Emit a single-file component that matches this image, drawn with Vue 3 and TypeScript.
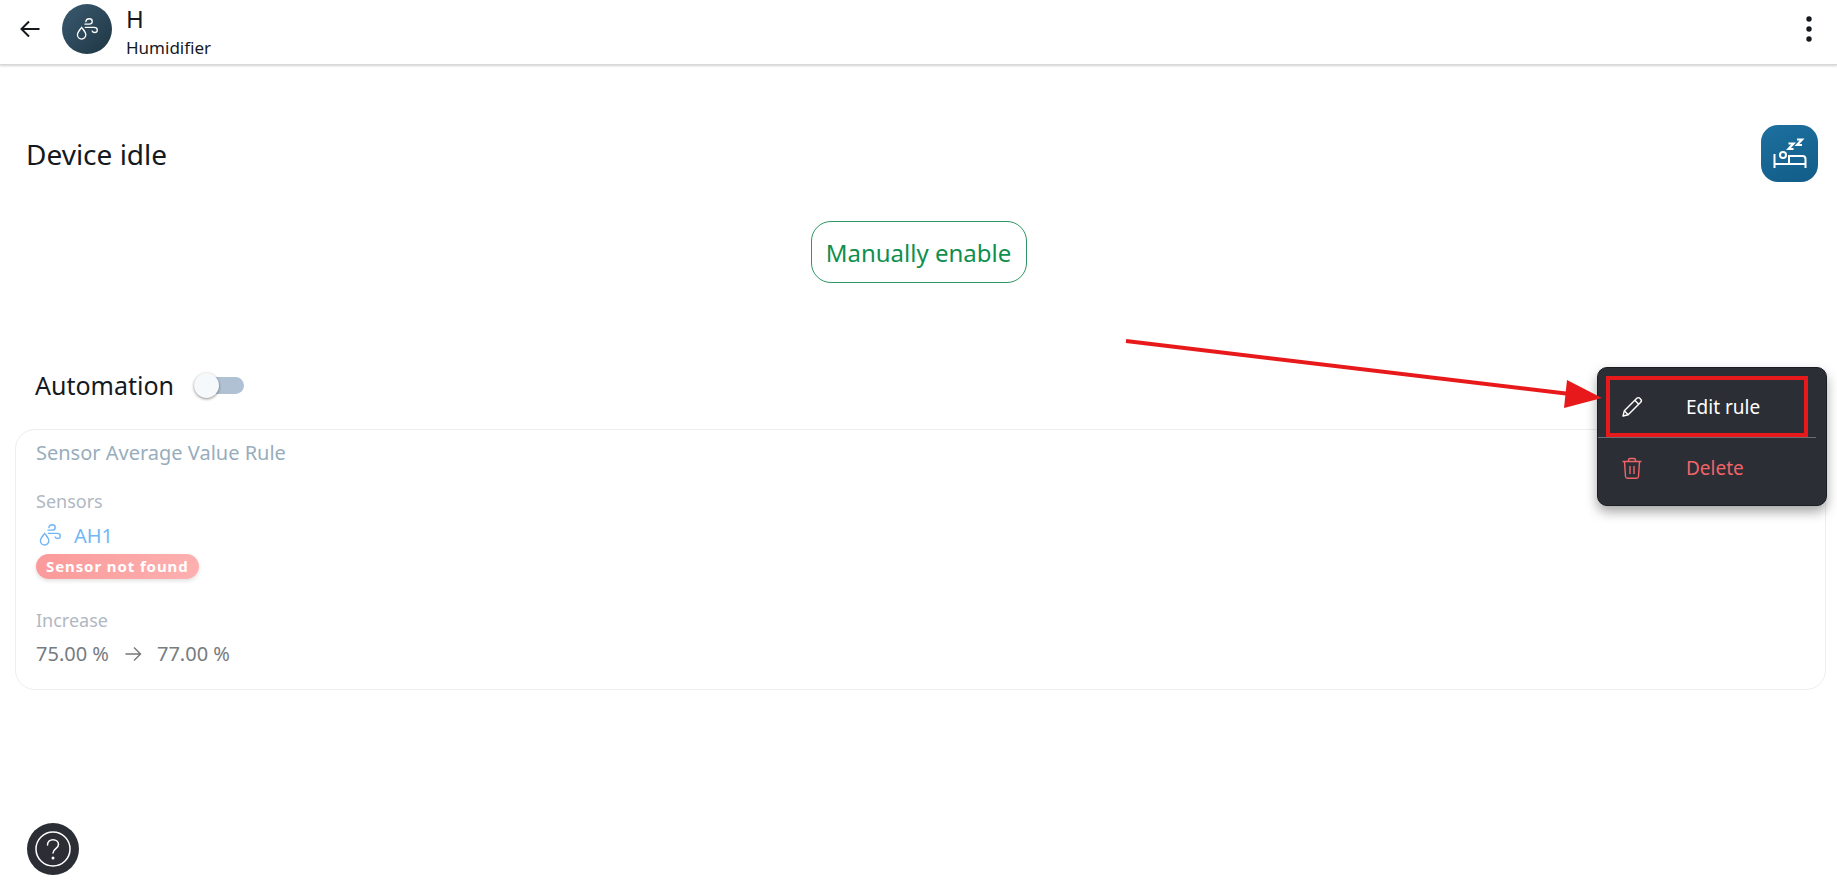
<script setup lang="ts">
const menuItems = [
  { key: "edit", label: "Edit rule" },
  { key: "delete", label: "Delete" },
];
</script>

<template>
  <div class="page">
    <header class="topbar">
      <svg class="back" viewBox="0 0 24 24" width="24" height="24">
        <path d="M21.5 12H3.5M11 4.5 3.5 12l7.5 7.5" fill="none" stroke="#15191e" stroke-width="2" />
      </svg>
      <div class="avatar">
        <svg viewBox="0 0 24 24" width="28" height="28" fill="none" stroke="#fff" stroke-width="1.1" stroke-linecap="round">
          <path d="M7.4 10.6c-1.6 2.2-3.6 4.1-3.6 6.4a3.6 3.6 0 0 0 7.2 0c0-2.3-2-4.2-3.6-6.4Z" />
          <path d="M11 5.6c.3-1.5 1.5-2.4 2.9-2.4 1.500 0 2.600 1 2.600 2.300 0 1.400-1.100 2.300-2.600 2.300h-3.700" />
          <path d="M10.500 10.600h7.500c1.500 0 2.800.8 2.800 2.200 0 1.300-1 2.200-2.300 2.200-1 0-1.800-.5-2.100-1.300" />
        </svg>
      </div>
      <div class="titles">
        <div class="name">H</div>
        <div class="kind">Humidifier</div>
      </div>
      <svg class="more" viewBox="0 0 8 28" width="8" height="28">
        <circle cx="4" cy="4" r="2.700" fill="#15191e" />
        <circle cx="4" cy="14" r="2.700" fill="#15191e" />
        <circle cx="4" cy="24" r="2.700" fill="#15191e" />
      </svg>
    </header>

    <section class="state-row">
      <h1>Device idle</h1>
      <div class="state-icon">
        <svg viewBox="0 0 40 40" width="40" height="40" fill="none" stroke="#fff" stroke-width="2">
          <path d="M18.500 9.500h5l-5 5.500h5M27 5.500h5l-5 5.500h5" stroke-width="2.200" />
          <circle cx="13" cy="21" r="3" />
          <path d="M4.500 20v14M4.500 30h31M35.500 34v-9c0-1.800-1.200-3-3-3H19v8" />
        </svg>
      </div>
    </section>

    <div class="action-row">
      <button type="button" class="enable-btn">Manually enable</button>
    </div>

    <div class="automation-row">
      <span class="automation-label">Automation</span>
      <span class="switch"><span class="thumb"></span></span>
    </div>

    <section class="rule-card">
      <div class="rule-title">Sensor Average Value Rule</div>
      <div class="field-label sensors-label">Sensors</div>
      <div class="sensor">
        <svg viewBox="0 0 24 24" width="28" height="28" fill="none" stroke="#72b6f5" stroke-width="1.200" stroke-linecap="round">
          <path d="M7.400 10.600c-1.600 2.200-3.600 4.100-3.600 6.400a3.600 3.600 0 0 0 7.200 0c0-2.300-2-4.200-3.600-6.400Z" />
          <path d="M11 5.600c.3-1.500 1.500-2.400 2.900-2.400 1.500 0 2.600 1 2.600 2.300 0 1.400-1.100 2.300-2.600 2.300h-3.700" />
          <path d="M10.500 10.600h7.500c1.500 0 2.800.8 2.800 2.200 0 1.300-1 2.200-2.300 2.200-1 0-1.800-.5-2.100-1.300" />
        </svg>
        <span>AH1</span>
      </div>
      <div class="not-found">Sensor not found</div>
      <div class="field-label increase-label">Increase</div>
      <div class="values">
        <span>75.00 %</span>
        <svg viewBox="0 0 20 20" width="20" height="20" fill="none" stroke="#777" stroke-width="1.400">
          <path d="M2.500 10h15M11 3.500l6.500 6.500-6.500 6.500" />
        </svg>
        <span>77.00 %</span>
      </div>
    </section>

    <div class="menu">
      <div v-for="item in menuItems" :key="item.key" :class="['menu-item', item.key]">
        <svg v-if="item.key === 'edit'" viewBox="0 0 24 24" width="24" height="24" fill="none" stroke="#fff" stroke-width="1.400" stroke-linejoin="round">
          <path d="M3 21l1.300-5.200L16.800 3.300c.9-.9 2.200-.9 3 0l.9.900c.9.900.9 2.100 0 3L8.200 19.700 3 21Z" />
          <path d="M14.800 5.300l3.900 3.900M4.300 15.800l3.900 3.900" />
        </svg>
        <svg v-else viewBox="0 0 24 24" width="24" height="24" fill="none" stroke="#f0646a" stroke-width="1.400" stroke-linejoin="round">
          <path d="M2.500 5.500h19M8.500 5.500V3.800c0-.8.6-1.300 1.300-1.300h4.400c.7 0 1.300.5 1.300 1.300v1.700" />
          <path d="M4.500 5.500l1 15c.1 1 .9 1.800 1.900 1.800h9.200c1 0 1.800-.8 1.900-1.800l1-15" />
          <path d="M10 10v8M14 10v8" />
        </svg>
        <span class="menu-label">{{ item.label }}</span>
      </div>
    </div>

    <button type="button" class="help" aria-label="Help">
      <svg viewBox="0 0 36 36" width="36" height="36" fill="none" stroke="#fff" stroke-width="1.500">
        <circle cx="18" cy="18" r="17" />
        <path d="M12.500 14c0-3.200 2.400-5.300 5.500-5.300s5.500 2.100 5.500 4.900c0 4-5.500 4.200-5.500 8.400" stroke-linecap="round" />
        <circle cx="18" cy="27" r="1.500" fill="#fff" stroke="none" />
      </svg>
    </button>

    <!-- annotation drawn over the screen -->
    <svg class="annotation" viewBox="0 0 1837 893" width="1837" height="893">
      <line x1="1126" y1="341" x2="1570" y2="394" stroke="#e8191b" stroke-width="4" />
      <polygon points="1602,398 1567,380 1564,408" fill="#e8191b" />
      <rect x="1608" y="378" width="198" height="57" fill="none" stroke="#e8191b" stroke-width="4" />
    </svg>
  </div>
</template>

<style>
html,
body {
  margin: 0;
  background: #fff;
}
</style>

<style scoped>
.page {
  position: relative;
  width: 1837px;
  height: 893px;
  overflow: hidden;
  background: #fff;
  font-family: "Noto Sans", "Open Sans", sans-serif;
  color: #15191e;
}

.topbar {
  display: flex;
  align-items: center;
  height: 64px;
  padding: 0 18px;
  border-bottom: 1px solid #d8d8d8;
  box-shadow: 0 1px 2px rgba(0, 0, 0, 0.18);
  box-sizing: content-box;
}

.back {
  margin-right: 20px;
  margin-top: -6px;
}

.avatar {
  width: 50px;
  height: 50px;
  border-radius: 50%;
  background: linear-gradient(135deg, #3a5a70, #1f3644);
  display: flex;
  align-items: center;
  justify-content: center;
  margin-right: 14px;
  margin-top: -6px;
}

.titles {
  flex: 1;
}

.name {
  font-size: 24px;
  line-height: 30px;
}

.kind {
  font-size: 17px;
  line-height: 24px;
  margin-top: 2px;
}

.more {
  margin-right: 6px;
  margin-top: -6px;
}

.state-row {
  display: flex;
  align-items: center;
  justify-content: space-between;
  padding: 60px 19px 0 26px;
  height: 57px;
}

.state-row h1 {
  margin: 0;
  font-size: 28px;
  font-weight: 400;
}

.state-icon {
  width: 57px;
  height: 57px;
  border-radius: 17px;
  background: linear-gradient(160deg, #1d709f, #125c88);
  display: flex;
  align-items: center;
  justify-content: center;
}

.action-row {
  display: flex;
  justify-content: center;
  margin-top: 39px;
}

.enable-btn {
  width: 216px;
  height: 62px;
  padding: 0;
  border: 1px solid #2e9464;
  border-radius: 20px;
  background: #fff;
  color: #0f8f4e;
  font-family: inherit;
  font-size: 24px;
}

.automation-row {
  display: flex;
  align-items: center;
  gap: 20px;
  margin-top: 68px;
  padding-left: 35px;
  height: 68px;
}

.automation-label {
  font-size: 25px;
}

.switch {
  position: relative;
  width: 50px;
  height: 17px;
  border-radius: 9px;
  background: #b0c1d3;
}

.thumb {
  position: absolute;
  left: 0;
  top: -4px;
  width: 25px;
  height: 25px;
  border-radius: 50%;
  background: #f6f9fc;
  box-shadow: 0 1px 3px rgba(0, 0, 0, 0.45);
}

.rule-card {
  margin: 10px 11px 0 15px;
  height: 261px;
  box-sizing: border-box;
  padding: 9px 20px;
  border: 1px solid #eeeeee;
  border-radius: 20px;
}

.rule-title {
  font-size: 20px;
  line-height: 28px;
  color: #97adbc;
}

.field-label {
  font-size: 18px;
  line-height: 24px;
  color: #b0b8c2;
}

.sensors-label {
  margin-top: 22px;
}

.sensor {
  display: flex;
  align-items: center;
  gap: 10px;
  margin-top: 7px;
  height: 30px;
  font-size: 20px;
  color: #74b7f5;
}

.not-found {
  display: inline-block;
  margin-top: 4px;
  padding: 0 10px;
  height: 25px;
  line-height: 25px;
  border-radius: 13px;
  background: linear-gradient(90deg, #fb9a9a, #fdb0b0);
  box-shadow: 0 2px 4px rgba(0, 0, 0, 0.12);
  color: #fff;
  font-size: 15px;
  font-weight: 700;
  letter-spacing: 0.9px;
}

.increase-label {
  margin-top: 29px;
}

.values {
  display: flex;
  align-items: center;
  gap: 14px;
  margin-top: 8px;
  font-size: 20px;
  color: #777c80;
}

.menu {
  position: absolute;
  left: 1597px;
  top: 367px;
  width: 230px;
  height: 139px;
  padding-top: 9px;
  box-sizing: border-box;
  border-radius: 10px;
  background: #2b2e34;
  border: 1px solid #1a1d22;
  box-shadow: 0 6px 12px rgba(0, 0, 0, 0.35);
}

.menu-item {
  display: flex;
  align-items: center;
  height: 60px;
  padding-left: 22px;
  font-size: 19px;
}

.menu-item.edit {
  color: #fff;
  margin-right: 10px;
  border-bottom: 1px solid #6a6d72;
}

.menu-item.delete {
  color: #f0646a;
}

.menu-label {
  margin-left: 42px;
}

.help {
  position: absolute;
  left: 27px;
  top: 823px;
  width: 52px;
  height: 52px;
  padding: 0;
  border: none;
  border-radius: 50%;
  background: #2b2e34;
  display: flex;
  align-items: center;
  justify-content: center;
}

.annotation {
  position: absolute;
  left: 0;
  top: 0;
  pointer-events: none;
}
</style>
